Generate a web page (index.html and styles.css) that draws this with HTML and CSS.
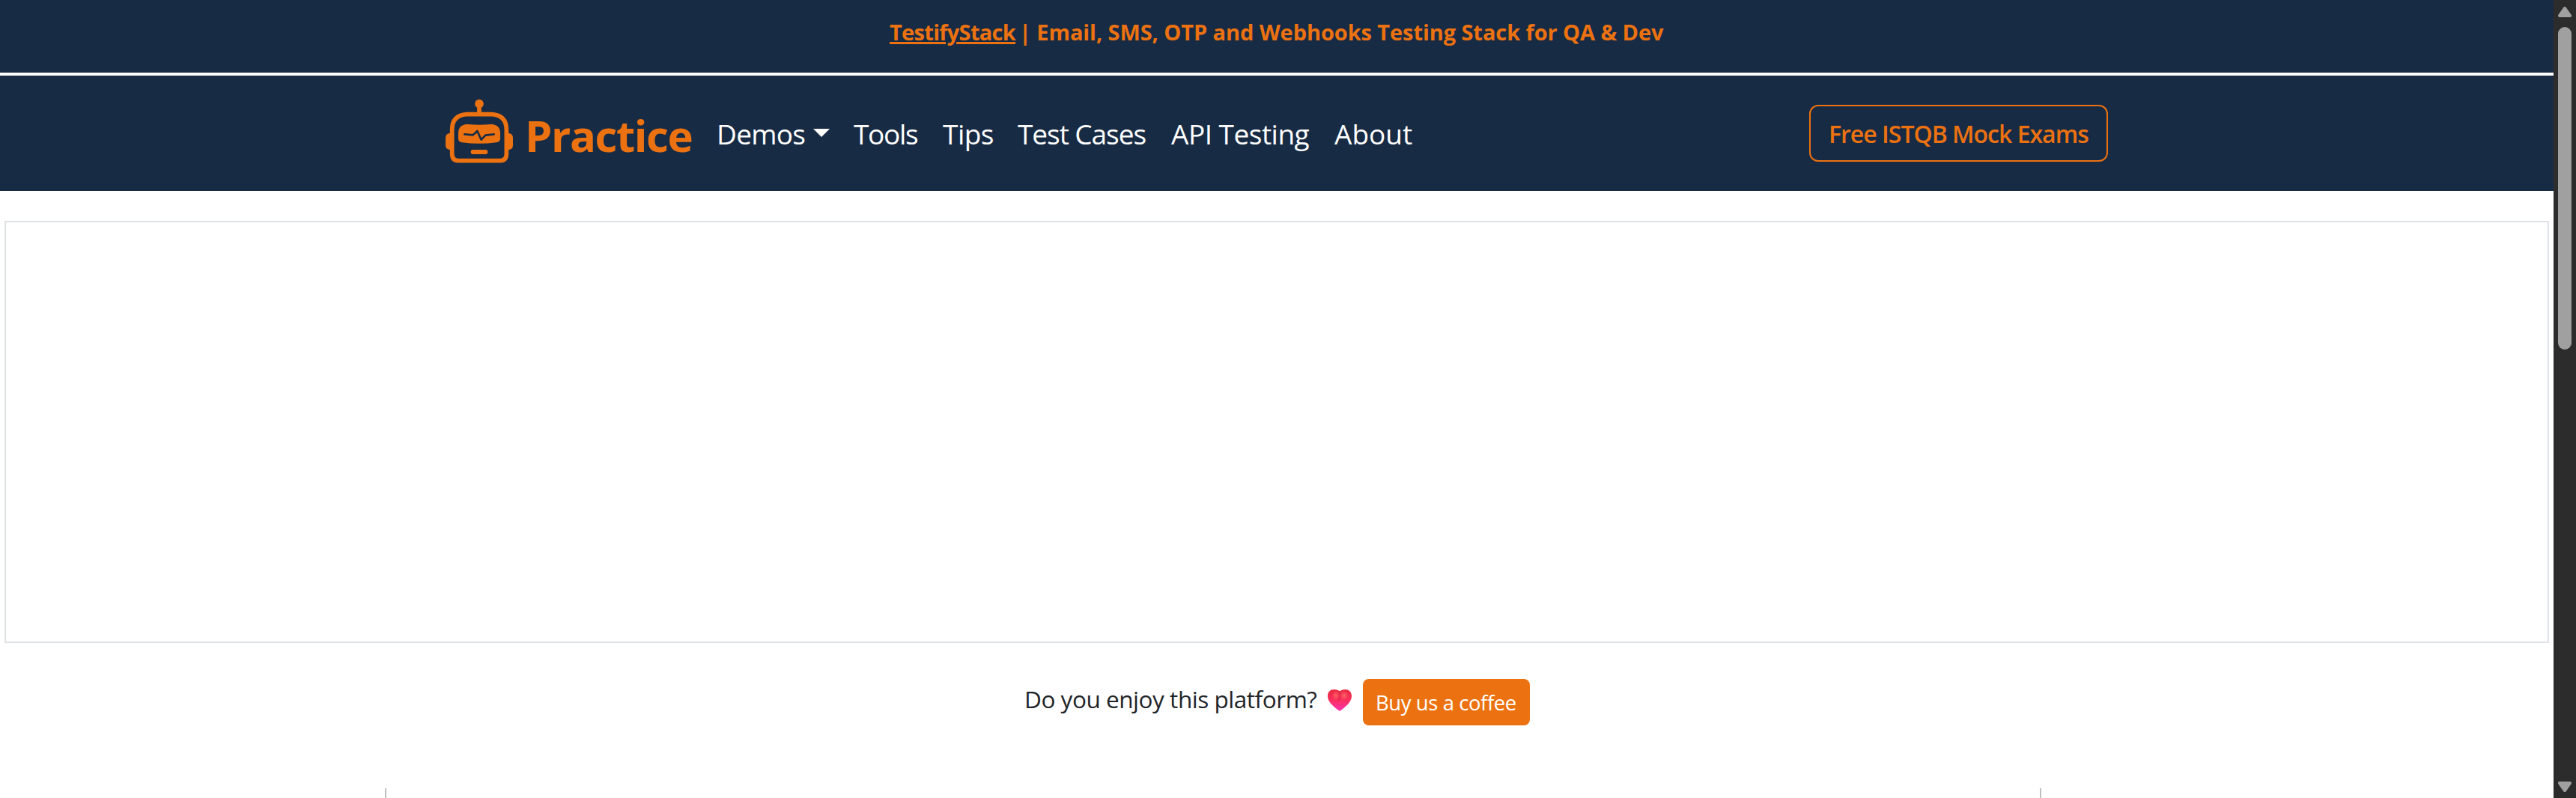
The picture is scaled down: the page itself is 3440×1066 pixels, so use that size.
FILE: index.html
```
<!DOCTYPE html>
<html lang="en">
<head>
<meta charset="utf-8">
<title>Practice</title>
<link rel="stylesheet" href="styles.css">
</head>
<body>
<div class="page">
  <header class="banner"><a class="banner-link" href="#">TestifyStack</a><span class="banner-text">| Email, SMS, OTP and Webhooks Testing Stack for QA &amp; Dev</span></header>
  <nav class="navbar">
    <a class="brand" href="#">
      <svg class="robot" viewBox="102 66 276 258" aria-hidden="true">
        <circle cx="240" cy="86" r="17.5" fill="#ec7211"/>
        <path d="M240 90V128" stroke="#ec7211" stroke-width="17" fill="none"/>
        <path d="M190 128H290Q349 132 349 190V286Q349 314 324 314H156Q131 314 131 286V190Q131 132 190 128Z" fill="none" stroke="#ec7211" stroke-width="17"/>
        <path d="M126 203Q105 204 105 222V252Q105 270 126 271ZM354 203Q375 204 375 222V252Q375 270 354 271Z" fill="#ec7211"/>
        <path d="M192 168Q240 172 288 168Q324 170 324 204V226Q324 240 308 241Q240 250 172 241Q156 240 156 226V204Q156 170 192 168Z" fill="#ec7211"/>
        <path d="M181 208L215 211L232 195L248 230L265 212L299 208" fill="none" stroke="#182b44" stroke-width="8" stroke-linecap="round" stroke-linejoin="round"/>
        <path d="M215 279H265" stroke="#ec7211" stroke-width="18" stroke-linecap="round"/>
      </svg>
      <span class="brand-name">Practice</span>
    </a>
    <div class="links">
      <a class="link demos" href="#">Demos<span class="caret"></span></a>
      <a class="link tools" href="#">Tools</a>
      <a class="link tips" href="#">Tips</a>
      <a class="link cases" href="#">Test Cases</a>
      <a class="link api" href="#">API Testing</a>
      <a class="link about" href="#">About</a>
    </div>
    <a class="exams" href="#">Free ISTQB Mock Exams</a>
  </nav>
  <div class="ad"></div>
  <div class="support">
    <span class="question">Do you enjoy this platform?</span>
    <svg class="heart" viewBox="0 0 32 29" aria-hidden="true">
      <defs>
        <linearGradient id="base" x1="0" y1="0" x2="0" y2="1"><stop offset="0" stop-color="#e8283f"/><stop offset=".5" stop-color="#fb2f60"/><stop offset="1" stop-color="#f833b4"/></linearGradient>
        <radialGradient id="shine"><stop offset="0" stop-color="#ff6b62"/><stop offset="1" stop-color="#ff4560" stop-opacity="0"/></radialGradient>
      </defs>
      <path d="M16 29C9 24 0 17 0 9C0 3 4 0 8.500 0C12 0 14.500 1 16 2.500C17.500 1 20 0 23.500 0C28 0 32 3 32 9C32 17 23 24 16 29Z" fill="url(#base)"/>
      <path d="M16 3Q17 10 14 15" fill="none" stroke="#c81c40" stroke-width="1.500" opacity=".6"/>
      <ellipse cx="11" cy="8" rx="6" ry="7" fill="url(#shine)"/><ellipse cx="22" cy="8" rx="7" ry="7" fill="url(#shine)"/>
    </svg>
    <a class="coffee" href="#">Buy us a coffee</a>
  </div>
  <div class="content"></div>
</div>
<div class="scrollbar">
  <svg class="arrow" viewBox="0 0 18 14"><path d="M9 2L16 12H2Z"/></svg>
  <div class="thumb"></div>
  <svg class="arrow down" viewBox="0 0 18 14"><path d="M2 2H16L9 12Z"/></svg>
</div>
</body>
</html>
```
FILE: styles.css
```
* { box-sizing: border-box; }
body { margin: 0; height: 1066px; display: flex; overflow: hidden; background: #fff; font-family: "Open Sans", "Noto Sans", sans-serif; color: #212529; }
a { color: inherit; text-decoration: none; white-space: nowrap; }
.page { width: 3410px; height: 1066px; display: flex; flex-direction: column; }

.banner { height: 101px; flex: none; padding: 22px 0 0 1188px; display: flex; gap: 5px; background: #182b44; border-bottom: 4px solid #fff; color: #ec7211; font-size: 29px; font-weight: 700; line-height: 42px; white-space: nowrap; }
.banner-link { width: 168px; letter-spacing: -0.7px; text-decoration: underline; text-decoration-thickness: 3px; text-underline-offset: 2px; }
.banner-text { letter-spacing: -0.08px; }

.navbar { height: 154px; flex: none; padding: 0 595px 0 594px; display: flex; align-items: center; background: #182b44; }
.brand { width: 362px; display: flex; align-items: center; color: #ec7211; }
.robot { width: 92px; height: 86px; margin: 0 15px 6px 0; }
.brand-name { padding-top: 5px; font-size: 58px; font-weight: 700; letter-spacing: -1.4px; line-height: 80px; }
.links { display: flex; color: #fff; font-size: 37px; line-height: 56px; padding-top: 1px; }
.link { flex: none; }
.demos { width: 184px; letter-spacing: -0.7px; padding-left: 1px; display: flex; align-items: center; }
.caret { margin: -2px 0 0 11px; border: 11px solid transparent; border-top-color: #fff; border-bottom: 0; }
.tools { width: 119px; letter-spacing: -1.3px; }
.tips { width: 100px; letter-spacing: -0.5px; }
.cases { width: 205px; letter-spacing: -1.05px; }
.api { width: 218px; letter-spacing: -0.5px; }
.exams { width: 399px; height: 76px; margin-left: auto; padding-left: 24px; border: 2px solid #ec7211; border-radius: 12px; color: #ec7211; font-size: 32px; font-weight: 600; letter-spacing: -1px; line-height: 73px; }

.ad { height: 564px; flex: none; margin: 40px 6px 0; border: 2px solid #dee2e6; }
.support { height: 62px; flex: none; margin-top: 48px; padding-left: 1368px; display: flex; align-items: flex-start; }
.question { width: 405px; font-size: 31.5px; letter-spacing: -0.46px; line-height: 54px; white-space: nowrap; }
.heart { width: 32px; height: 29px; margin: 14px 15px 0 0; }
.coffee { width: 223px; height: 62px; padding-left: 17px; border-radius: 8px; background: #ec7211; color: #fff; font-size: 27.5px; letter-spacing: -0.43px; line-height: 63px; }
.content { width: 2212px; flex: 1; margin: 84px 0 0 514px; border: solid #c0c0c0; border-width: 0 2px; }

.scrollbar { width: 30px; height: 1066px; padding: 9px 6px 8px; display: flex; flex-direction: column; background: #2c2c2c; }
.arrow { width: 18px; height: 14px; fill: #a0a0a0; stroke: #a0a0a0; stroke-width: 4px; stroke-linejoin: round; }
.thumb { height: 431px; margin-top: 13px; border-radius: 9px; background: #a0a0a0; }
.down { margin-top: auto; }
```
